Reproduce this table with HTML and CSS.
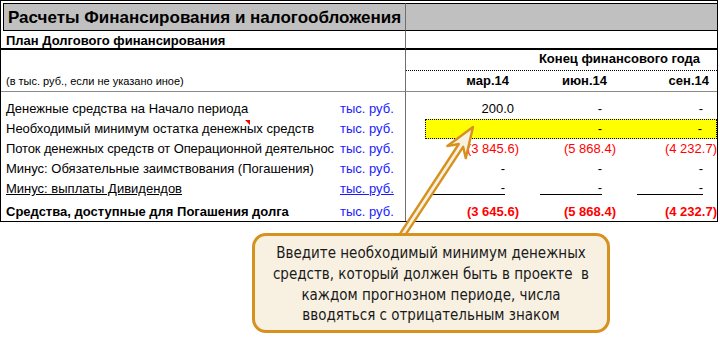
FILE: index.html
```html
<!DOCTYPE html>
<html lang="ru">
<head>
<meta charset="utf-8">
<title>Расчеты Финансирования и налогообложения</title>
<link rel="stylesheet" href="styles.css">
</head>
<body>
<div class="page">
  <div class="sheet">
    <div class="title-l">Расчеты Финансирования и налогообложения</div>
    <div class="title-r"></div>

    <div class="plan-l">План Долгового финансирования</div>
    <div class="plan-r"></div>

    <div class="head-l"><span class="note">(в тыс. руб., если не указано иное)</span></div>
    <div class="head-r">
      <div class="fy">Конец финансового года</div>
      <div class="dates">
        <div class="d1">мар.14</div>
        <div class="d2">июн.14</div>
        <div class="d3">сен.14</div>
      </div>
    </div>

    <div class="sp-l"></div>
    <div class="sp-r"></div>

    <div class="lab">Денежные средства на Начало периода</div>
    <div class="unit">тыс. руб.</div>
    <div class="num c1"><span class="pos">200.0</span></div>
    <div class="num c2"><span class="dash">-</span></div>
    <div class="num c3"><span class="dash">-</span></div>

    <div class="lab has-note">Необходимый минимум остатка денежных средств<span class="tri"></span></div>
    <div class="unit">тыс. руб.</div>
    <div class="yel-wrap">
      <div class="yel">
        <div class="ycell"></div>
        <div class="ycell"><span class="dash">-</span></div>
        <div class="ycell"><span class="dash">-</span></div>
      </div>
    </div>

    <div class="lab tight">Поток денежных средств от Операционной деятельнос</div>
    <div class="unit">тыс. руб.</div>
    <div class="num c1"><span class="neg">(3 845.6)</span></div>
    <div class="num c2"><span class="neg">(5 868.4)</span></div>
    <div class="num c3"><span class="neg">(4 232.7)</span></div>

    <div class="lab">Минус: Обязательные заимствования (Погашения)</div>
    <div class="unit">тыс. руб.</div>
    <div class="num c1"><span class="dash">-</span></div>
    <div class="num c2"><span class="dash">-</span></div>
    <div class="num c3"><span class="dash">-</span></div>

    <div class="lab"><span class="u">Минус: выплаты Дивидендов</span></div>
    <div class="unit"><span class="u">тыс. руб.</span></div>
    <div class="num c1"><span class="ul w1">-</span></div>
    <div class="num c2"><span class="ul w2">-</span></div>
    <div class="num c3"><span class="ul w3">-</span></div>

    <div class="lab total">Средства, доступные для Погашения долга</div>
    <div class="unit total">тыс. руб.</div>
    <div class="num c1 total"><span class="neg b">(3 645.6)</span></div>
    <div class="num c2 total"><span class="neg b">(5 868.4)</span></div>
    <div class="num c3 total"><span class="neg b">(4 232.7)</span></div>
  </div>

  <svg class="arrow" width="720" height="341" viewBox="0 0 720 341" aria-hidden="true">
    <polygon points="473,127 465.77,158.12 463.12,146.82 401.17,241.42 396.83,238.58 458.78,143.98 447.37,146.06"
      fill="#f8f1e2" stroke="#d6911e" stroke-width="2.4" stroke-linejoin="round"/>
  </svg>

  <div class="callout">
    <p>Введите необходимый минимум денежных<br>средств, который должен быть в проекте&nbsp; в<br>каждом прогнозном периоде, числа<br>вводяться с отрицательным знаком</p>
  </div>
</div>
</body>
</html>
```

FILE: styles.css
```css
* { box-sizing: border-box; }

html, body {
  margin: 0;
  padding: 0;
  background: #ffffff;
}

.page {
  position: relative;
  width: 720px;
  height: 341px;
  overflow: hidden;
  font-family: "Liberation Sans", Arial, sans-serif;
  font-size: 13px;
  color: #000;
}

.sheet {
  width: 718px;
  border: 1px solid #000;
  display: grid;
  grid-template-columns: 336px 68px 116px 96px 100px;
}

/* title row */
.title-l {
  grid-column: 1 / 3;
  margin: 2px 0 0 2px;
  height: 28px;
  border: 1px solid #000;
  border-right: none;
  background: #c0c0c0;
  font-weight: bold;
  font-size: 17px;
  line-height: 27px;
  padding-left: 4px;
  white-space: nowrap;
}
.title-r {
  grid-column: 3 / 6;
  margin-top: 2px;
  height: 28px;
  border-top: 1px solid #000;
  border-bottom: 1px solid #000;
  border-left: 1px solid #6f6f6f;
  background: #c0c0c0;
}

/* plan row */
.plan-l {
  grid-column: 1 / 3;
  height: 19px;
  border-bottom: 2px solid #000;
  font-weight: bold;
  line-height: 17px;
  padding: 1px 0 0 5px;
}
.plan-r {
  grid-column: 3 / 6;
  height: 19px;
  border-bottom: 2px solid #000;
  border-left: 1px solid #6f6f6f;
}

/* header row */
.head-l {
  grid-column: 1 / 3;
  height: 42px;
  border-bottom: 1px solid #8a8a8a;
  display: flex;
  align-items: flex-end;
  padding: 0 0 3px 5px;
}
.note {
  font-size: 11px;
  line-height: 13px;
}
.head-r {
  grid-column: 3 / 6;
  height: 42px;
  border-bottom: 1px solid #8a8a8a;
  border-left: 1px solid #6f6f6f;
  font-weight: bold;
}
.fy {
  height: 21px;
  border-bottom: 1px dotted #000;
  text-align: right;
  padding-right: 17px;
  line-height: 18px;
}
.dates {
  display: grid;
  grid-template-columns: 115px 96px 100px;
  height: 20px;
  line-height: 20px;
  text-align: right;
}
.d1 { padding-right: 12px; }
.d2 { padding-right: 10px; }
.d3 { padding-right: 8px; }

/* spacer */
.sp-l { grid-column: 1 / 3; height: 7px; }
.sp-r { grid-column: 3 / 6; height: 7px; border-left: 1px solid #6f6f6f; }

/* data rows */
.lab {
  height: 20px;
  line-height: 20px;
  padding-left: 5px;
  white-space: nowrap;
  overflow: hidden;
}
.tight { letter-spacing: -0.12px; }
.has-note { position: relative; }
.tri {
  position: absolute;
  left: 244px;
  top: 1px;
  width: 0;
  height: 0;
  border-top: 5px solid #ff0000;
  border-left: 5px solid transparent;
}
.unit {
  height: 20px;
  line-height: 20px;
  padding-left: 3px;
  color: #1a1aff;
  white-space: nowrap;
}
.u { text-decoration: underline; }

.num {
  height: 20px;
  line-height: 20px;
  display: flex;
  justify-content: flex-end;
  align-items: flex-start;
  white-space: nowrap;
}
.c1 { border-left: 1px solid #6f6f6f; padding-right: 2px; }
.c2 { padding-right: 1px; }
.c3 { padding-right: 0; }

.pos { padding-right: 5px; }
.dash { padding-right: 14px; }
.neg { color: #ff0000; }
.b { font-weight: bold; }

.ul {
  margin: 2px 14px 0 0;
  height: 14px;
  line-height: 13px;
  border-bottom: 1px solid #000;
  text-align: right;
}
.w1 { width: 72px; }
.w2 { width: 62px; }
.w3 { width: 66px; }

/* yellow input row */
.yel-wrap {
  grid-column: 3 / 6;
  height: 20px;
  border-left: 1px solid #6f6f6f;
  padding-left: 19px;
}
.yel {
  height: 20px;
  background: #ffff00;
  border: 1px dotted #000;
  display: grid;
  grid-template-columns: 95px 96px 99px;
  line-height: 18px;
  text-align: right;
}
.ycell:nth-child(2) .dash { padding-right: 15px; }

/* total row */
.total {
  height: 22px;
  line-height: 18px;
  padding-top: 4px;
}
.lab.total { font-weight: bold; }
.num.total { line-height: 18px; }

/* overlays */
.arrow {
  position: absolute;
  left: 0;
  top: 0;
  z-index: 1;
}
.callout {
  position: absolute;
  left: 252px;
  top: 233px;
  width: 358px;
  height: 100px;
  z-index: 2;
  border: 3px solid #d6911e;
  border-radius: 14px;
  background: #f8f1e2;
  display: flex;
  align-items: center;
  justify-content: center;
}
.callout p {
  margin: 0;
  padding-top: 3px;
  text-align: center;
  font-family: "DejaVu Sans Condensed", "DejaVu Sans", sans-serif;
  font-size: 15px;
  line-height: 20.7px;
  color: #1a1a1a;
  white-space: nowrap;
}
```
